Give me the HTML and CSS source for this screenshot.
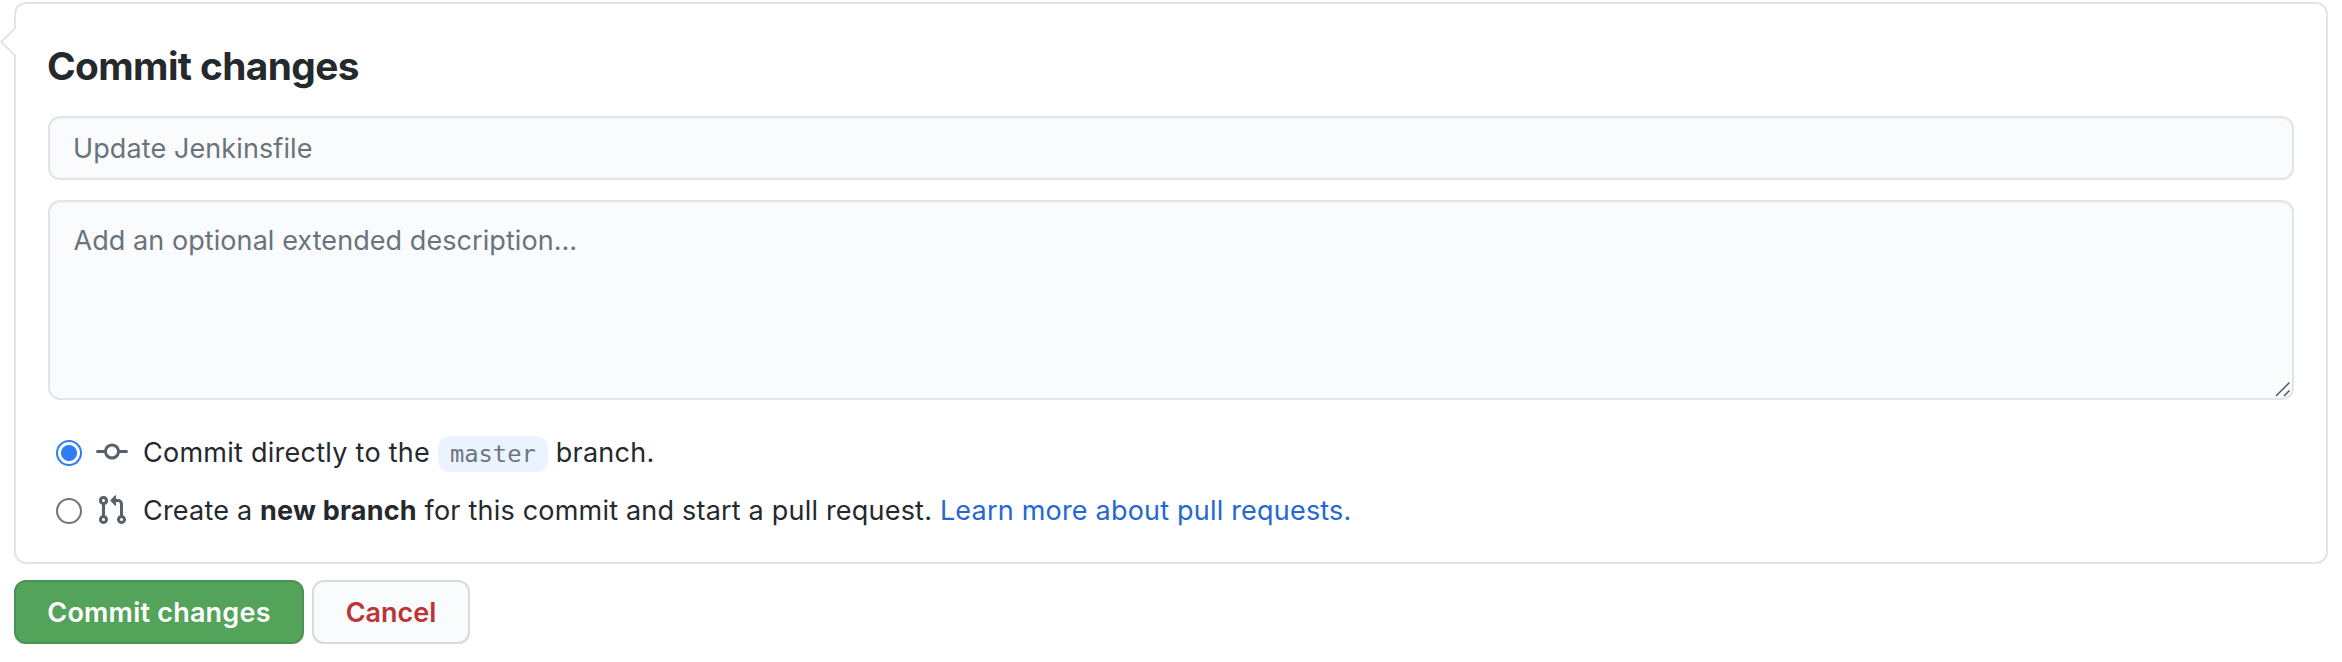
FILE: index.html
```html
<!DOCTYPE html>
<html lang="en">
<head>
<meta charset="utf-8">
<title>Commit changes</title>
<link rel="stylesheet" href="styles.css">
</head>
<body>
<form class="commit">
  <section class="panel">
    <svg class="caret" viewBox="0 0 16 30" fill="none"><path class="caret-fill" d="M16 .8 1.5 15 16 29.2z"/><path class="caret-line" d="M15.5 1 1.2 15 15.5 29"/></svg>
    <h1 class="title">Commit changes</h1>
    <div class="field summary">Update Jenkinsfile</div>
    <div class="field description">Add an optional extended description…
      <svg class="grip" viewBox="0 0 16 16"><path d="M2 15 15.5 1.5M10 15 15.5 9.5"/></svg>
    </div>
    <div class="choices">
      <label class="choice">
        <span class="radio checked"></span>
        <svg class="icon" viewBox="0 0 16 16"><path fill-rule="evenodd" d="M10.5 7.75a2.5 2.5 0 11-5 0 2.5 2.5 0 015 0zm1.43.75a4.002 4.002 0 01-7.86 0H.75a.75.75 0 110-1.5h3.32a4.001 4.001 0 017.86 0h3.32a.75.75 0 110 1.5h-3.32z"/></svg>
        <span class="text direct">Commit directly to the <code class="branch">master</code> branch.</span>
      </label>
      <label class="choice">
        <span class="radio"></span>
        <svg class="icon" viewBox="0 0 16 16"><path fill-rule="evenodd" d="M7.177 3.073L9.573.677A.25.25 0 0110 .854v4.792a.25.25 0 01-.427.177L7.177 3.427a.25.25 0 010-.354zM3.75 2.5a.75.75 0 100 1.5.75.75 0 000-1.5zm-2.25.75a2.25 2.25 0 113 2.122v5.256a2.251 2.251 0 11-1.5 0V5.372A2.25 2.25 0 011.5 3.25zM11 2.5h-1V4h1a1 1 0 011 1v5.628a2.251 2.251 0 101.5 0V5A2.5 2.5 0 0011 2.5zm1 10.25a.75.75 0 111.5 0 .75.75 0 01-1.5 0zM3.75 12a.75.75 0 100 1.5.75.75 0 000-1.5z"/></svg>
        <span class="text request">Create a <b>new branch</b> for this commit and start a pull request. <a class="link">Learn more about pull requests.</a></span>
      </label>
    </div>
  </section>
  <div class="actions">
    <button type="button" class="btn primary">Commit changes</button>
    <button type="button" class="btn danger">Cancel</button>
  </div>
</form>
</body>
</html>
```
FILE: styles.css
```css
* { box-sizing: border-box; }
body {
  margin: 0;
  background: #fff;
  color: #24292e;
  font: 27px/42px Inter, "Liberation Sans", sans-serif;
}
.commit { padding: 2px 14px 0; }
.panel {
  position: relative;
  height: 562px;
  padding: 37px 32px 0;
  border: 2px solid #e1e4e8;
  border-radius: 12px;
}
.caret { position: absolute; left: -16px; top: 23px; width: 16px; height: 30px; }
.caret-fill { fill: #fff; }
.caret-line { stroke: #dcdde0; stroke-width: 1.5; }
.title { margin: 0 0 25px -1px; height: 50px; font-size: 38.8px; line-height: 50px; font-weight: 660; letter-spacing: -.6px; }
.field {
  border: 2px solid #e1e4e8;
  border-radius: 12px;
  background: #fafbfc;
  color: #6a737d;
  padding: 0 23px;
  box-shadow: inset 0 2px 0 rgba(225, 228, 232, .2);
}
.summary { height: 64px; padding: 1px 23px 0; line-height: 60px; margin-bottom: 20px; letter-spacing: .1px; }
.description { position: relative; height: 200px; padding: 17.5px 23.5px 0; letter-spacing: .07px; }
.grip { position: absolute; right: 2px; bottom: 1px; width: 16px; height: 16px; fill: none; stroke: #555; stroke-width: 1.5; }
.choices { display: flex; flex-direction: column; gap: 16px; padding: 32px 0 0 8px; }
.choice { display: flex; align-items: center; height: 42px; }
.radio { flex: none; width: 26px; height: 26px; border: 2px solid #767676; border-radius: 50%; }
.checked { border-color: #2f7cf6; background: radial-gradient(circle, #2f7cf6 7.5px, #fff 8.5px); }
.icon { flex: none; width: 32px; height: 32px; margin: 0 15px 2px 14px; fill: #586069; }
.text { white-space: pre; }
.direct { letter-spacing: .26px; }
.request { letter-spacing: .2px; }
.branch { display: inline-block; height: 36px; padding: 0 12px; border-radius: 12px; background: #eaf3ff; color: #6e767e; font: 23.8px/36px "DejaVu Sans Mono", monospace; letter-spacing: 0; }
b { font-weight: 700; }
.link { color: #2467d0; }
.actions { display: flex; gap: 8px; padding-top: 16px; }
.btn { height: 64px; padding: 1px 0 0; border: 2px solid #4b9153; border-radius: 12px; font: 600 27px/58px Inter, sans-serif; box-shadow: 0 2px 0 rgba(27, 31, 35, .08); }
.primary { width: 290px; background: #54a35b; color: #fff; letter-spacing: .22px; }
.danger { width: 158px; background: #fafbfc; border-color: #d9dadc; color: #bc3437; box-shadow: 0 2px 0 rgba(27, 31, 35, .04); }
```
